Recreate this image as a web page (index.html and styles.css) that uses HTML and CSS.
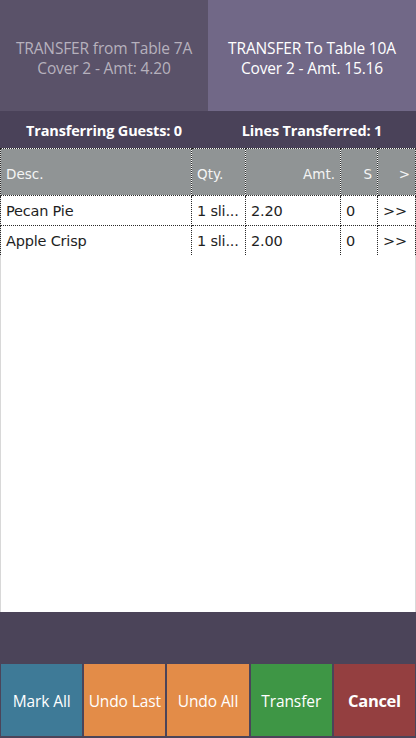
FILE: index.html
```html
<!DOCTYPE html>
<html>
<head>
<meta charset="utf-8">
<link rel="stylesheet" href="styles.css">
</head>
<body>
<div class="app">
  <div class="tables">
    <div class="tbl from">TRANSFER from Table 7A<br>Cover 2 - Amt: 4.20</div>
    <div class="tbl to">TRANSFER To Table 10A<br>Cover 2 - Amt. 15.16</div>
  </div>
  <div class="info">
    <div class="info-item">Transferring Guests: 0</div>
    <div class="info-item">Lines Transferred: 1</div>
  </div>
  <div class="grid-area">
    <table class="grid">
      <colgroup>
        <col class="c-desc"><col class="c-qty"><col class="c-amt"><col class="c-s"><col class="c-arr">
      </colgroup>
      <thead>
        <tr><th>Desc.</th><th>Qty.</th><th class="r">Amt.</th><th class="r">S</th><th class="r">&gt;</th></tr>
      </thead>
      <tbody>
        <tr><td>Pecan Pie</td><td>1 sli...</td><td>2.20</td><td>0</td><td>&gt;&gt;</td></tr>
        <tr><td>Apple Crisp</td><td>1 sli...</td><td>2.00</td><td>0</td><td>&gt;&gt;</td></tr>
      </tbody>
    </table>
  </div>
  <div class="spacer-bar"></div>
  <div class="buttons">
    <div class="btn mark">Mark All</div>
    <div class="btn undo">Undo Last</div>
    <div class="btn undo">Undo All</div>
    <div class="btn transfer">Transfer</div>
    <div class="btn cancel">Cancel</div>
  </div>
</div>
</body>
</html>
```
FILE: styles.css
```css
html, body {
  margin: 0;
  padding: 0;
  background: #ffffff;
}
.app {
  width: 416px;
  height: 738px;
  display: flex;
  flex-direction: column;
  font-family: "Open Sans", "Noto Sans", sans-serif;
  box-sizing: border-box;
}
.tables {
  display: flex;
  height: 111px;
  flex: none;
}
.tbl {
  flex: 1;
  display: flex;
  align-items: center;
  justify-content: center;
  text-align: center;
  font-size: 15.5px;
  line-height: 20px;
  letter-spacing: -0.15px;
  padding-top: 4px;
  box-sizing: border-box;
}
.from {
  background: #5a5269;
  color: #b6b1bd;
}
.to {
  background: #716887;
  color: #ffffff;
}
.info {
  display: flex;
  height: 37px;
  flex: none;
  background: #4a4259;
  color: #ffffff;
  font-weight: 700;
  font-size: 14.5px;
  letter-spacing: -0.15px;
}
.info-item {
  flex: 1;
  display: flex;
  align-items: center;
  justify-content: center;
  padding-top: 2px;
}
.grid-area {
  flex: 1;
  background: #ffffff;
  border-left: 1px solid #d8d8d8;
  border-right: 1px solid #d8d8d8;
}
.grid {
  border-collapse: collapse;
  table-layout: fixed;
  width: 415px;
  margin-left: -1px;
  font-family: "DejaVu Sans", sans-serif;
}
.c-desc { width: 191px; }
.c-qty { width: 54px; }
.c-amt { width: 95px; }
.c-s { width: 37px; }
.c-arr { width: 38px; }
.grid th, .grid td {
  border: 1px dotted #2a2a2a;
  white-space: nowrap;
  overflow: hidden;
  padding: 0 5px;
}
.grid th {
  background: #909495;
  color: #f4f4f4;
  font-weight: 400;
  font-size: 13.5px;
  height: 43px;
  text-align: left;
  padding-top: 3px;
}
.grid th.r { text-align: right; }
.grid td {
  height: 29px;
  font-size: 14.5px;
  color: #1e1e1e;
  padding-top: 0;
  letter-spacing: -0.2px;
}
.grid tbody tr:last-child td { border-bottom: none; }
.spacer-bar {
  height: 52px;
  flex: none;
  background: #4b4459;
}
.buttons {
  display: flex;
  height: 74px;
  flex: none;
  background: #4b4459;
  gap: 2px;
  padding: 0 1px 2px 1px;
  box-sizing: border-box;
}
.btn {
  flex: 1;
  display: flex;
  align-items: center;
  justify-content: center;
  color: #ffffff;
  font-size: 15.5px;
  letter-spacing: -0.1px;
  padding-top: 1px;
}
.mark { background: #3e7a97; }
.undo { background: #e38c48; }
.transfer { background: #3e9645; }
.cancel { background: #943f40; font-weight: 700; font-size: 16.5px; letter-spacing: -0.3px; }
```
